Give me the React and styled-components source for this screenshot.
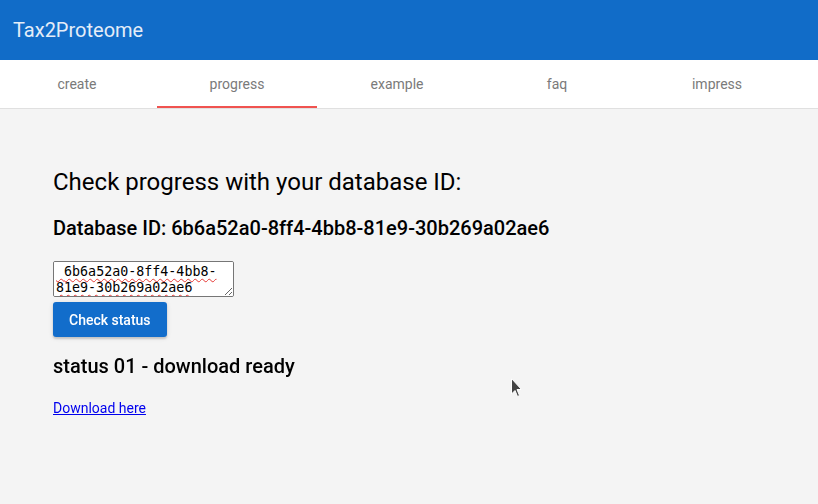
import React, { useState } from 'react';
import styled, { createGlobalStyle } from 'styled-components';

const GlobalStyle = createGlobalStyle`
  html, body {
    margin: 0;
    padding: 0;
    background: #f4f4f4;
    font-family: Roboto, "Liberation Sans", sans-serif;
  }
`;

const Page = styled.div`
  position: relative;
  width: 818px;
  height: 504px;
  overflow: hidden;
  background: #f4f4f4;
`;

const Header = styled.header`
  display: flex;
  align-items: center;
  height: 60px;
  padding: 0 13px;
  background: #116cc8;
  color: #e4edf8;
  font-size: 20px;
`;

const TabBar = styled.nav`
  display: flex;
  height: 48px;
  background: #fff;
  border-bottom: 1px solid #e0e0e0;
`;

const TabRow = styled.div`
  display: flex;
  margin-left: -3px;
`;

const Tab = styled.div`
  flex: 0 0 160px;
  display: flex;
  align-items: center;
  justify-content: center;
  font-size: 14px;
  color: #7a7a7a;
  box-sizing: border-box;
  border-bottom: 2px solid ${p => (p.$active ? '#f05350' : 'transparent')};
  padding-top: 2px;
  cursor: pointer;
`;

const Content = styled.main`
  display: flex;
  flex-direction: column;
  align-items: flex-start;
  padding: 59px 53px 0;
`;

const Title = styled.h1`
  margin: 0;
  font-size: 24px;
  font-weight: 400;
  line-height: 28px;
  color: #000;
`;

const IdLine = styled.h2`
  margin: 20px 0 0;
  font-size: 20px;
  font-weight: 500;
  line-height: 24px;
  color: #000;
`;

const IdInput = styled.textarea`
  box-sizing: border-box;
  margin: 21px 0 0;
  width: 181px;
  height: 36px;
  padding: 2px;
  border: 1px solid #767676;
  border-radius: 2px;
  background: #fff;
  font-family: "DejaVu Sans Mono", monospace;
  font-size: 13.33px;
  line-height: 15.5px;
  color: #000;
  text-decoration: underline wavy #e53935;
  text-decoration-thickness: 1px;
  text-underline-offset: 2px;
`;

const Button = styled.button`
  margin-top: 5px;
  height: 35px;
  padding: 0 16px;
  border: none;
  border-radius: 3px;
  background: #126dcb;
  color: #fff;
  font-family: Roboto, sans-serif;
  font-size: 14px;
  font-weight: 500;
  box-shadow: 0 2px 2px rgba(0, 0, 0, 0.14), 0 1px 5px rgba(0, 0, 0, 0.12);
  cursor: pointer;
`;

const Status = styled.h3`
  margin: 17px 0 0;
  font-size: 20px;
  font-weight: 500;
  line-height: 24px;
  color: #000;
`;

const DownloadLink = styled.a`
  margin-top: 22px;
  font-size: 14px;
  color: #0000ee;
  text-decoration: underline;
`;

const Pointer = styled.svg`
  position: absolute;
  left: 509px;
  top: 376px;
`;

const tabs = ['create', 'progress', 'example', 'faq', 'impress'];
const dbId = '6b6a52a0-8ff4-4bb8-81e9-30b269a02ae6';

const App = () => {
  const [active, setActive] = useState(1);
  const [value, setValue] = useState(' ' + dbId);

  return (
    <Page>
      <GlobalStyle />
      <Header>Tax2Proteome</Header>
      <TabBar>
        <TabRow>
          {tabs.map((t, i) => (
            <Tab key={t} $active={i === active} onClick={() => setActive(i)}>
              {t}
            </Tab>
          ))}
        </TabRow>
      </TabBar>
      <Content>
        <Title>Check progress with your database ID:</Title>
        <IdLine>Database ID: {dbId}</IdLine>
        <IdInput value={value} onChange={e => setValue(e.target.value)} />
        <Button>Check status</Button>
        <Status>status 01 - download ready</Status>
        <DownloadLink href="#">Download here</DownloadLink>
      </Content>
      <Pointer width="16" height="24" viewBox="0 0 16 24">
        <path
          d="M2.5 2.5 L2.5 18 L6 14.5 L8.5 20.5 L10.5 19.5 L8 13.5 L12.5 13.5 Z"
          fill="#444"
          stroke="#fff"
          strokeWidth="1"
          strokeLinejoin="miter"
        />
      </Pointer>
    </Page>
  );
};

export default App;
